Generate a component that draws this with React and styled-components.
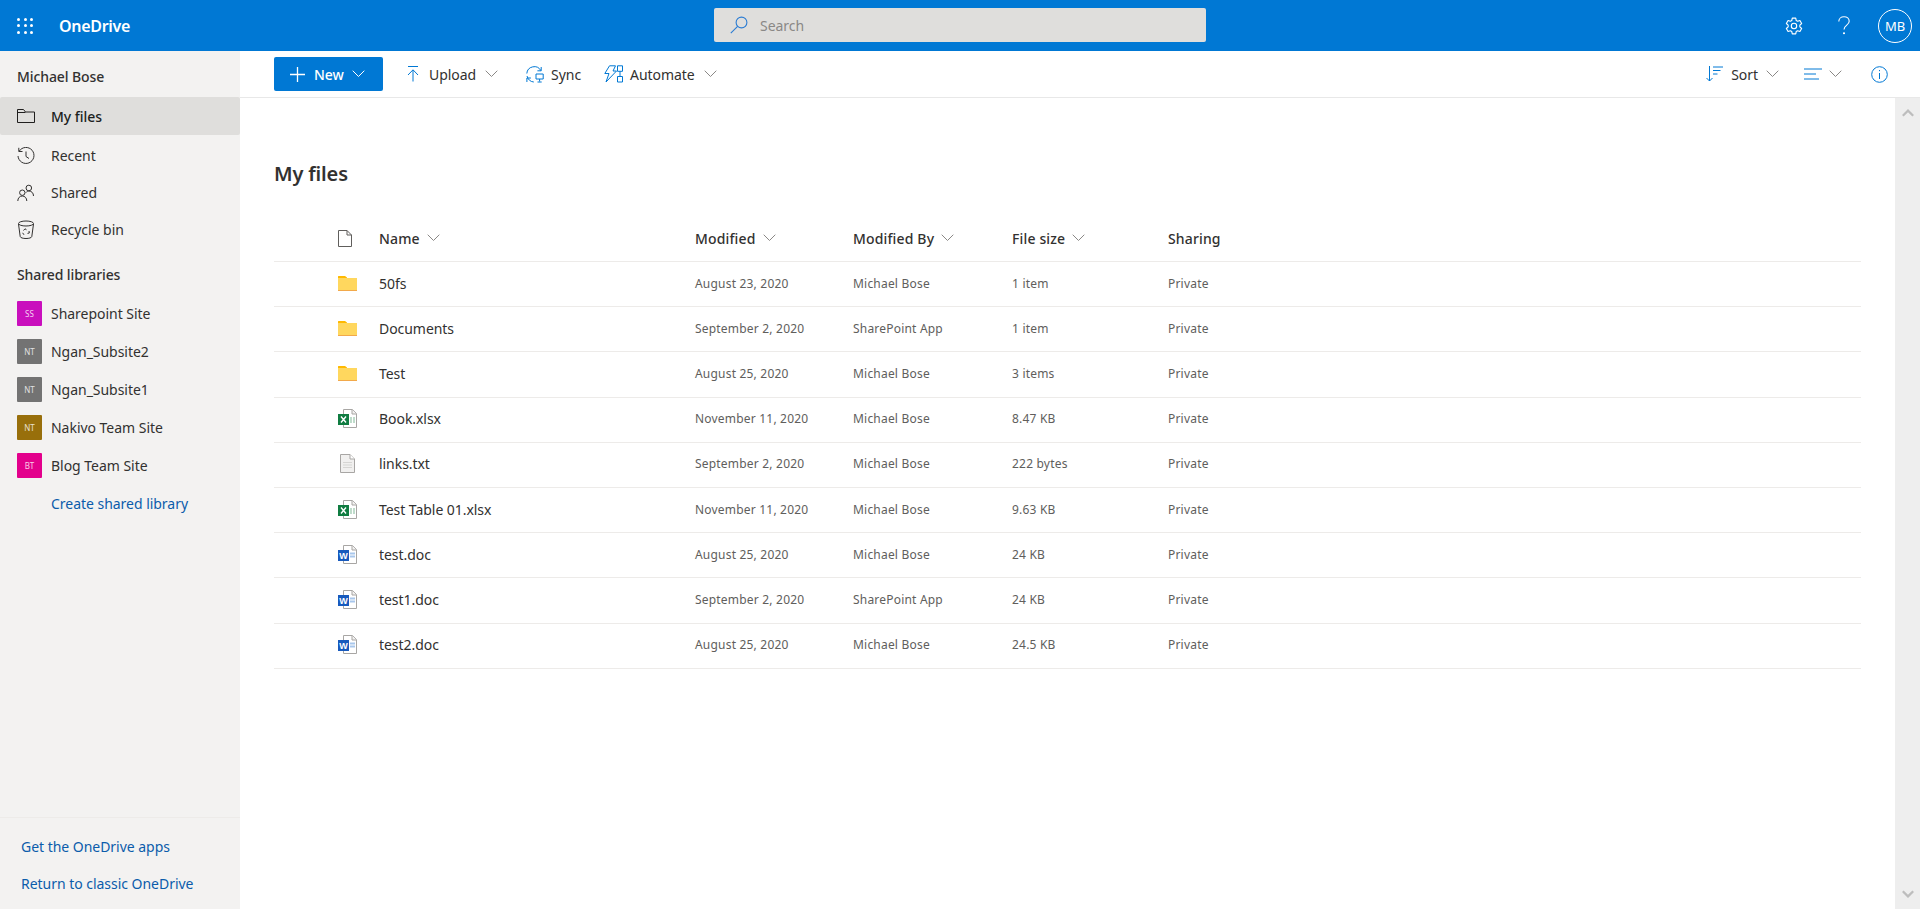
import React from 'react';
import styled, { createGlobalStyle } from 'styled-components';

const FONT = '"Noto Sans", "Open Sans", "Liberation Sans", sans-serif';

const Global = createGlobalStyle`
  html, body { margin: 0; padding: 0; height: 100%; overflow: hidden; }
  body { font-family: ${FONT}; color: #323130; background: #fff; }
  #root { height: 100%; }
  * { box-sizing: border-box; }
`;

const Page = styled.div`
  display: flex;
  flex-direction: column;
  height: 909px;
`;

const TopBar = styled.header`
  position: relative;
  flex: 0 0 51px;
  display: flex;
  align-items: center;
  background: #0078d4;
  color: #fff;
`;

const Waffle = styled.div`
  display: grid;
  grid-template-columns: repeat(3, 3px);
  grid-auto-rows: 3px;
  gap: 3.5px;
  margin-left: 17px;
  span { background: #fff; border-radius: 50%; }
`;

const Brand = styled.div`
  margin-left: 26px;
  font-size: 16px;
  font-weight: 600;
  letter-spacing: -0.3px;
`;

const SearchBox = styled.div`
  position: absolute;
  left: 714px;
  top: 8px;
  width: 492px;
  height: 34px;
  display: flex;
  align-items: center;
  gap: 12px;
  padding-left: 16px;
  background: #dfdedc;
  border-radius: 2px;
  font-size: 14px;
  color: #8a8886;
  letter-spacing: -0.05px;
`;

const TopActions = styled.div`
  margin-left: auto;
  display: flex;
  align-items: center;
  padding-right: 8px;
`;

const TopIcon = styled.div`
  display: flex;
  align-items: center;
  justify-content: center;
  margin-right: ${({ $gap }) => $gap}px;
`;

const Avatar = styled.div`
  width: 34px;
  height: 34px;
  border: 1px solid #fff;
  border-radius: 50%;
  display: flex;
  align-items: center;
  justify-content: center;
  font-size: 13px;
`;

const Body = styled.div`
  flex: 1;
  display: flex;
  min-height: 0;
`;

const Sidebar = styled.aside`
  flex: 0 0 240px;
  display: flex;
  flex-direction: column;
  background: #f3f2f1;
  font-size: 14px;
  letter-spacing: -0.03px;
`;

const SideHeading = styled.div`
  height: 46px;
  padding: ${({ $top }) => $top}px 0 0 17px;
  display: flex;
  align-items: center;
  color: #323130;
  font-weight: 500;
  letter-spacing: -0.1px;
`;

const NavItem = styled.div`
  height: ${({ $active }) => ($active ? 38 : 37)}px;
  margin-bottom: ${({ $active }) => ($active ? 2 : 0)}px;
  display: flex;
  align-items: center;
  padding-left: 17px;
  gap: 16px;
  border-radius: 2px;
  color: ${({ $active }) => ($active ? '#201f1e' : '#323130')};
  font-weight: ${({ $active }) => ($active ? 500 : 400)};
  background: ${({ $active }) => ($active ? '#dfdedc' : 'transparent')};
  svg { flex: 0 0 18px; }
`;

const SiteRow = styled.div`
  height: 38px;
  display: flex;
  align-items: center;
  padding-left: 17px;
  gap: 9px;
`;

const SiteTile = styled.div`
  width: 25px;
  height: 25px;
  border-radius: 1px;
  display: flex;
  align-items: center;
  justify-content: center;
  background: ${({ $color }) => $color};
  color: rgba(255, 255, 255, 0.8);
  font-size: 8px;
  letter-spacing: 0;
`;

const SideLink = styled.div`
  height: ${({ $h }) => $h || 37}px;
  display: flex;
  align-items: center;
  padding-left: ${({ $indent }) => $indent}px;
  color: #0b5cab;
`;

const SideFooter = styled.div`
  margin-top: auto;
  padding: 10px 0 7px;
  border-top: 1px solid #edebe9;
`;

const Main = styled.main`
  flex: 1;
  display: flex;
  flex-direction: column;
  min-width: 0;
`;

const Toolbar = styled.div`
  flex: 0 0 47px;
  display: flex;
  align-items: center;
  padding-left: 34px;
  border-bottom: 1px solid #e8e8e8;
  font-size: 14px;
  letter-spacing: -0.05px;
`;

const NewButton = styled.div`
  width: 109px;
  height: 34px;
  display: flex;
  align-items: center;
  padding-left: 16px;
  background: #0078d4;
  border-radius: 2px;
  color: #fff;
  font-weight: 500;
  margin-right: 24px;
`;

const Command = styled.div`
  display: flex;
  align-items: center;
  gap: ${({ $inner }) => $inner || 0}px;
  margin-left: ${({ $before }) => $before || 0}px;
  margin-right: ${({ $gap }) => $gap || 0}px;
`;

const CommandLabel = styled.span`
  margin: 0 ${({ $right }) => $right}px 0 ${({ $left }) => $left}px;
`;

const ToolbarRight = styled.div`
  margin-left: auto;
  display: flex;
  align-items: center;
  padding-right: 32px;
`;

const ContentRow = styled.div`
  flex: 1;
  display: flex;
  min-height: 0;
`;

const Content = styled.div`
  flex: 1;
  padding: 62px 34px 0;
  min-width: 0;
`;

const Title = styled.h1`
  margin: 0;
  font-size: 20px;
  line-height: 27px;
  font-weight: 600;
  color: #323130;
  letter-spacing: -0.15px;
`;

const Columns = '105px 316px 158px 159px 156px 1fr';

const HeadRow = styled.div`
  display: grid;
  grid-template-columns: ${Columns};
  align-items: center;
  margin-top: 30px;
  height: 45px;
  padding-bottom: 2px;
  border-bottom: 1px solid #edebe9;
  font-size: 14px;
  font-weight: 500;
  color: #323130;
  letter-spacing: 0.15px;
`;

const HeadCell = styled.div`
  display: flex;
  align-items: center;
  gap: 7px;
`;

const IconCell = styled.div`
  display: flex;
  align-items: center;
  padding-left: 64px;
`;

const FileRow = styled.div`
  display: grid;
  grid-template-columns: ${Columns};
  align-items: center;
  height: 45.2px;
  padding-bottom: 2px;
  border-bottom: 1px solid #edebe9;
`;

const FileName = styled.div`
  font-size: 14px;
  color: #323130;
  letter-spacing: -0.05px;
`;

const Meta = styled.div`
  font-size: 12px;
  color: #605e5c;
  letter-spacing: 0.2px;
`;

const ScrollTrack = styled.div`
  flex: 0 0 25px;
  display: flex;
  flex-direction: column;
  justify-content: space-between;
  align-items: center;
  padding: 10px 0 10px;
  background: #eeeeee;
`;

const Chevron = ({ color = '#8a8886', size = 13 }) => (
  <svg width={size} height="8" viewBox="0 0 13 8" fill="none">
    <path d="M.7.7 6.5 6.5 12.3.7" stroke={color} strokeWidth="1" />
  </svg>
);

const ScrollArrow = ({ up }) => (
  <svg width="12" height="9" viewBox="0 0 12 9">
    <path d={up ? 'M0 7 6 1l6 6-1.6 1.6L6 4.2 1.6 8.6z' : 'M0 2l6 6 6-6L10.4.4 6 4.8 1.6.4z'} fill="#bdbdbd" />
  </svg>
);

const SearchIcon = () => (
  <svg width="18" height="18" viewBox="0 0 18 18" fill="none" stroke="#2b7cd3" strokeWidth="1.1">
    <circle cx="11.5" cy="6.5" r="5.4" />
    <path d="M7.6 10.4.8 17.2" />
  </svg>
);

const GearIcon = () => (
  <svg width="18" height="18" viewBox="0 0 24 24" fill="none" stroke="#fff" strokeWidth="1.5" strokeLinejoin="round">
    <path d="M9.7 1.5h4.6l.7 3.2 1.8 1 3.1-1 2.3 4-2.4 2.2v2.2l2.4 2.2-2.3 4-3.1-1-1.8 1-.7 3.2H9.7L9 19.3l-1.8-1-3.1 1-2.3-4 2.4-2.2v-2.2L1.8 8.7l2.3-4 3.1 1 1.8-1z" />
    <circle cx="12" cy="12" r="3.6" />
  </svg>
);

const HelpIcon = () => (
  <svg width="12" height="19" viewBox="0 0 12 19" fill="none" stroke="#fff" strokeWidth="1.1">
    <path d="M.8 5.5C.8 2.7 3 .7 6 .7s5.2 2 5.2 4.600c0 3.900-5.200 3.700-5.200 8.200" />
    <circle cx="6" cy="17.3" r=".5" fill="#fff" />
  </svg>
);

const NavFolder = () => (
  <svg width="18" height="14" viewBox="0 0 18 14" fill="none" stroke="#201f1e" strokeWidth="1">
    <path d="M.5 13.5V.5h6l2 2.500h9v10.500zM.5 3.500h8" />
  </svg>
);

const NavRecent = () => (
  <svg width="18" height="18" viewBox="0 0 18 18" fill="none" stroke="#323130" strokeWidth="1">
    <path d="M2.2 4.2A8 8 0 1 1 1 9M1.8.8v3.700h3.700M9 4.500V9.500l3 2" />
  </svg>
);

const NavShared = () => (
  <svg width="18" height="18" viewBox="0 0 18 18" fill="none" stroke="#323130" strokeWidth="1">
    <circle cx="11.8" cy="4" r="2.8" />
    <circle cx="5.3" cy="8.7" r="2.7" />
    <path d="M.8 17c0-3 2-5 4.500-5s4.500 2 4.500 5M9 8.500c.8-1 1.700-1.500 2.800-1.500 2.800 0 4.700 2 4.700 5" />
  </svg>
);

const NavBin = () => (
  <svg width="18" height="19" viewBox="0 0 18 19" fill="none" stroke="#323130" strokeWidth="1">
    <ellipse cx="9" cy="3.5" rx="7.5" ry="2.5" />
    <path d="M1.5 4l1.700 12.500c.3 1.300 2.700 2 5.800 2s5.500-.7 5.800-2L16.500 4M6.500 10.500 8 8.800l1.500 1M12 11l.3 2-1.800.4M7 14.800l-1.400-2" />
  </svg>
);

const PlusIcon = () => (
  <svg width="15" height="15" viewBox="0 0 15 15" stroke="#fff" strokeWidth="1.3">
    <path d="M7.5 0v15M0 7.500h15" />
  </svg>
);

const UploadIcon = () => (
  <svg width="12" height="16" viewBox="0 0 12 16" fill="none" stroke="#0078d4" strokeWidth="1">
    <path d="M1 .5h10M6 15.500V4M1 9l5-5.200L11 9" />
  </svg>
);

const SyncIcon = () => (
  <svg width="18" height="17" viewBox="0 0 18 17" fill="none" stroke="#0078d4" strokeWidth="1">
    <path d="M.8 7.500A7.500 7.500 0 0 1 14.800 4.500M15.200 1v3.800h-3.800" />
    <path d="M1 10c.8 3.400 3.400 5.800 6.800 6M.9 16v-4h4" />
    <path d="M10 8h7.200v5H10zM13.600 13v2.500M11.500 16h4.200" />
  </svg>
);

const AutomateIcon = () => (
  <svg width="19" height="18" viewBox="0 0 19 18" fill="none" stroke="#0078d4" strokeWidth="1">
    <path d="M5.500.8h6L9 6h3.500L2 17l3-8.500H.8z" />
    <path d="M13.500.8h5v5.500h-5zM13.500 11.500h5V17h-5zM16 6.300v5.200" />
  </svg>
);

const SortIcon = () => (
  <svg width="17" height="16" viewBox="0 0 17 16" fill="none" stroke="#0078d4" strokeWidth="1">
    <path d="M3.5 0v15M.5 12l3 3 3-3M7 1h10M7 4.500h7.500M7 8h4.500" />
  </svg>
);

const ViewIcon = () => (
  <svg width="18" height="12" viewBox="0 0 18 12" fill="none" stroke="#0078d4" strokeWidth="1">
    <path d="M0 1h18M0 6h12M0 11h15" />
  </svg>
);

const InfoIcon = () => (
  <svg width="17" height="17" viewBox="0 0 17 17" fill="none" stroke="#0078d4" strokeWidth="1">
    <circle cx="8.5" cy="8.5" r="7.8" />
    <path d="M8.5 7v6M8.500 4v1.200" />
  </svg>
);

const HeadFileIcon = () => (
  <svg width="14" height="17" viewBox="0 0 14 17" fill="#fff" stroke="#605e5c" strokeWidth="1">
    <path d="M.5.500h8.500l4.500 4.500v11.500H.5zM9 .5V5h4.500" />
  </svg>
);

const FolderIcon = () => (
  <svg width="19" height="15" viewBox="0 0 19 15">
    <path d="M0 2V.5C0 .2.2 0 .5 0H7l2 1.500v.5z" fill="#ffb900" />
    <path d="M0 2h19v12H0z" fill="#ffd75e" />
    <path d="M0 14h19v1H0z" fill="#f2a94b" />
  </svg>
);

const SheetIcon = () => (
  <svg width="19" height="19" viewBox="0 0 19 19">
    <path d="M5.500.5h9l4 4v14h-13z" fill="#fff" stroke="#a8a6a4" />
    <path d="M14 .5V5h4.500" fill="#f3f2f1" stroke="#a8a6a4" />
    <path d="M12 8h2v6h-2zM15 8h2v6h-2z" fill="#bfdccb" />
    <path d="M0 5h11v11H0z" fill="#107c41" />
    <path d="M3 7.500l5 6M8 7.500l-5 6" stroke="#fff" strokeWidth="1.4" />
  </svg>
);

const WordIcon = () => (
  <svg width="19" height="19" viewBox="0 0 19 19">
    <path d="M5.500.5h9l4 4v14h-13z" fill="#fff" stroke="#a8a6a4" />
    <path d="M14 .5V5h4.500" fill="#f3f2f1" stroke="#a8a6a4" />
    <path d="M12 7.500h5v2h-5zM12 10.500h5v2h-5z" fill="#a9c7ec" />
    <path d="M0 5h11v11H0z" fill="#185abd" />
    <text x="5.5" y="14" textAnchor="middle" fontSize="9" fontWeight="700" fill="#fff" fontFamily="Liberation Sans, sans-serif">W</text>
  </svg>
);

const TextFileIcon = () => (
  <svg width="19" height="19" viewBox="-2 0 19 19">
    <path d="M.5.500h9.500l4.500 4.500v13.500H.5z" fill="#f1f0ef" stroke="#a8a6a4" />
    <path d="M10 .5V5h4.500" fill="#fff" stroke="#a8a6a4" />
    <path d="M3 8h9v1H3zM3 10.500h9v1H3zM3 13h9v1H3z" fill="#d6d5d3" />
  </svg>
);

const nav = [
  { label: 'My files', icon: <NavFolder />, active: true },
  { label: 'Recent', icon: <NavRecent /> },
  { label: 'Shared', icon: <NavShared /> },
  { label: 'Recycle bin', icon: <NavBin /> },
];

const sites = [
  { label: 'Sharepoint Site', tag: 'SS', color: '#c90fbd' },
  { label: 'Ngan_Subsite2', tag: 'NT', color: '#737373' },
  { label: 'Ngan_Subsite1', tag: 'NT', color: '#737373' },
  { label: 'Nakivo Team Site', tag: 'NT', color: '#986f0b' },
  { label: 'Blog Team Site', tag: 'BT', color: '#e3008c' },
];

const files = [
  { name: '50fs', icon: <FolderIcon />, date: 'August 23, 2020', by: 'Michael Bose', size: '1 item' },
  { name: 'Documents', icon: <FolderIcon />, date: 'September 2, 2020', by: 'SharePoint App', size: '1 item' },
  { name: 'Test', icon: <FolderIcon />, date: 'August 25, 2020', by: 'Michael Bose', size: '3 items' },
  { name: 'Book.xlsx', icon: <SheetIcon />, date: 'November 11, 2020', by: 'Michael Bose', size: '8.47 KB' },
  { name: 'links.txt', icon: <TextFileIcon />, date: 'September 2, 2020', by: 'Michael Bose', size: '222 bytes' },
  { name: 'Test Table 01.xlsx', icon: <SheetIcon />, date: 'November 11, 2020', by: 'Michael Bose', size: '9.63 KB' },
  { name: 'test.doc', icon: <WordIcon />, date: 'August 25, 2020', by: 'Michael Bose', size: '24 KB' },
  { name: 'test1.doc', icon: <WordIcon />, date: 'September 2, 2020', by: 'SharePoint App', size: '24 KB' },
  { name: 'test2.doc', icon: <WordIcon />, date: 'August 25, 2020', by: 'Michael Bose', size: '24.5 KB' },
];

const App = () => (
  <Page>
    <Global />
    <TopBar>
      <Waffle>
        {Array.from({ length: 9 }, (_, i) => <span key={i} />)}
      </Waffle>
      <Brand>OneDrive</Brand>
      <SearchBox>
        <SearchIcon />
        Search
      </SearchBox>
      <TopActions>
        <TopIcon $gap={35}><GearIcon /></TopIcon>
        <TopIcon $gap={28}><HelpIcon /></TopIcon>
        <Avatar>MB</Avatar>
      </TopActions>
    </TopBar>
    <Body>
      <Sidebar>
        <SideHeading $top={5}>Michael Bose</SideHeading>
        {nav.map((item) => (
          <NavItem key={item.label} $active={item.active}>
            {item.icon}
            {item.label}
          </NavItem>
        ))}
        <SideHeading $top={7}>Shared libraries</SideHeading>
        {sites.map((site) => (
          <SiteRow key={site.label}>
            <SiteTile $color={site.color}>{site.tag}</SiteTile>
            {site.label}
          </SiteRow>
        ))}
        <SideLink $indent={51} $h={38}>Create shared library</SideLink>
        <SideFooter>
          <SideLink $indent={21}>Get the OneDrive apps</SideLink>
          <SideLink $indent={21}>Return to classic OneDrive</SideLink>
        </SideFooter>
      </Sidebar>
      <Main>
        <Toolbar>
          <NewButton>
            <PlusIcon />
            <CommandLabel $left={9} $right={8}>New</CommandLabel>
            <Chevron color="#fff" />
          </NewButton>
          <Command $gap={28}>
            <UploadIcon />
            <CommandLabel $left={10} $right={9}>Upload</CommandLabel>
            <Chevron />
          </Command>
          <Command $gap={23}>
            <SyncIcon />
            <CommandLabel $left={7} $right={0}>Sync</CommandLabel>
          </Command>
          <Command>
            <AutomateIcon />
            <CommandLabel $left={7} $right={9}>Automate</CommandLabel>
            <Chevron />
          </Command>
          <ToolbarRight>
            <SortIcon />
            <CommandLabel $left={8} $right={8}>Sort</CommandLabel>
            <Chevron />
            <Command $before={25} $gap={29} $inner={7}>
              <ViewIcon />
              <Chevron />
            </Command>
            <InfoIcon />
          </ToolbarRight>
        </Toolbar>
        <ContentRow>
          <Content>
            <Title>My files</Title>
            <HeadRow>
              <IconCell><HeadFileIcon /></IconCell>
              <HeadCell>Name <Chevron /></HeadCell>
              <HeadCell>Modified <Chevron /></HeadCell>
              <HeadCell>Modified By <Chevron /></HeadCell>
              <HeadCell>File size <Chevron /></HeadCell>
              <HeadCell>Sharing</HeadCell>
            </HeadRow>
            {files.map((file) => (
              <FileRow key={file.name}>
                <IconCell>{file.icon}</IconCell>
                <FileName>{file.name}</FileName>
                <Meta>{file.date}</Meta>
                <Meta>{file.by}</Meta>
                <Meta>{file.size}</Meta>
                <Meta>Private</Meta>
              </FileRow>
            ))}
          </Content>
          <ScrollTrack>
            <ScrollArrow up />
            <ScrollArrow />
          </ScrollTrack>
        </ContentRow>
      </Main>
    </Body>
  </Page>
);

export default App;
